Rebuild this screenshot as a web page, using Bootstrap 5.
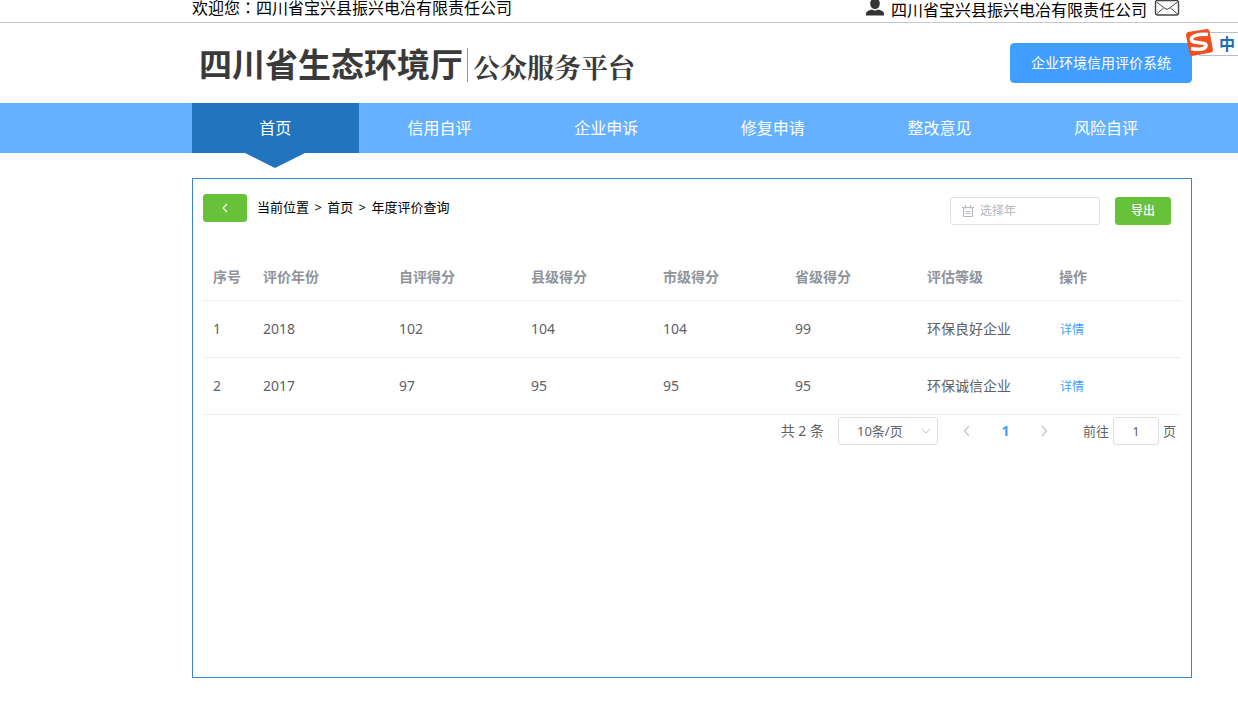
<!DOCTYPE html>
<html lang="zh-CN">
<head>
<meta charset="utf-8">
<meta name="viewport" content="width=device-width, initial-scale=1">
<title>年度评价查询</title>
<link rel="stylesheet" href="https://cdn.jsdelivr.net/npm/bootstrap@5.3.0/dist/css/bootstrap.min.css">
<style>
  body { font-family: "Noto Sans", "Noto Sans CJK SC", sans-serif; font-size: 14px; line-height: 20px; color: #606266; background: #fff; }
  .site-wrap { max-width: 1000px; margin-left: 192px; }
  .welcome-bar { border-bottom: 1px solid #c8c8c8; height: 23px; font-size: 16px; line-height: 16px; color: #000; font-family: "Liberation Sans", "Noto Sans CJK SC", sans-serif; }
  .welcome { padding-top: 1px; }
  .mid-colon { font-family: "Noto Sans CJK TC", sans-serif; line-height: 0; }
  .account { padding: 3px 12px 0 0; gap: 7px; }
  .account svg { margin-top: -3px; }
  .brand-row { min-height: 80px; }
  .brand { padding: 4px 0 0 7px; }
  .brand-main { font-size: 33px; line-height: 36px; font-weight: 700; color: #3a3a3a; }
  .brand-sub { font-size: 27px; line-height: 36px; padding-top: 4px; font-weight: 700; color: #3a3a3a; font-family: "Noto Serif CJK SC", "Noto Sans CJK SC", serif; }
  .brand-rule { width: 1px; height: 34px; background: #999; margin: 0 5px 0 4px; }
  .btn-system { background: #409eff; color: #fff; font-size: 14px; line-height: 20px; padding: 9px 20px; border: 1px solid #409eff; border-radius: 4px; }
  .main-nav { background: #66b1ff; }
  .main-nav .nav-link { flex: 0 0 calc(100% / 6); text-align: center; color: #fff; font-size: 16px; line-height: 24px; padding: 13px 5px 13px 0; border-radius: 0; }
  .main-nav .nav-link.active { background: #2175bc; position: relative; padding-right: 0; }
  .main-nav .nav-link.active::after { content: ""; position: absolute; top: 100%; left: 50%; margin-left: -30px; border: 30px solid transparent; border-top: 15px solid #2175bc; border-bottom: 0; }
  .panel-box { border: 1px solid #3d86c6; margin-top: 25px; padding: 15px 10px; min-height: 500px; }
  .btn-green { background: #67c23a; border: 1px solid #67c23a; color: #fff; border-radius: 3px; height: 28px; font-size: 12px; line-height: 12px; font-weight: 500; padding: 7px 15px; }
  .btn-back { width: 44px; }
  .crumb { color: #000; font-size: 13px; margin-left: 10px; padding-top: 3px; }
  .crumb span { margin: 0 2px; }
  .tools { padding: 3px 10px 0 0; gap: 15px; }
  .year-box { width: 150px; position: relative; }
  .year-box svg { position: absolute; left: 12px; top: 8px; }
  .field { border: 1px solid #dcdfe6; border-radius: 3px; height: 28px; font-size: 13px; line-height: 20px; color: #606266; background-color: #fff; }
  .year-box .field { padding: 0 8px 2px 29px; font-size: 12px; width: 100%; }
  .field::placeholder { color: #b4b8c0; opacity: 1; }
  .score-table { table-layout: fixed; margin: 25px 0 0; --bs-table-bg: transparent; }
  .score-table th, .score-table td { padding: 18px 10px 17px; border-bottom: 1px solid #ebeef5; color: #606266; line-height: 20px; }
  .score-table th { color: #909399; padding: 17px 10px 13px; font-weight: 700; }
  .score-table a { font-size: 12px; color: #409eff; text-decoration: none; padding-left: 1px; }
  .col-no { width: 50px; }
  .col-year { width: 136px; }
  .pager { font-size: 13px; padding: 2px 5px 0 0; }
  .pager-total { font-size: 14px; }
  .page-size { width: 100px; margin: 0 14px; padding: 0 18px; appearance: none; }
  .size-box { position: relative; }
  .size-box svg { position: absolute; right: 21px; top: 10px; pointer-events: none; }
  .step { border: 0; background: none; width: 30px; height: 28px; padding: 0; color: #c0c4cc; display: flex; align-items: center; justify-content: center; }
  .current { width: 47px; text-align: center; font-size: 14px; font-weight: 700; color: #409eff; text-decoration: none; }
  .jump { width: 46px; text-align: center; margin: 0 4px; }
  .ime-bar { position: absolute; top: 28px; right: 0; width: 53px; height: 29px; }
  .ime-bar span { position: absolute; left: 14px; right: 0; top: 4px; height: 24px; background: #fff; border: 1px solid #b9bec8; border-right: 0; padding-left: 19px; line-height: 22px; font-size: 16px; font-weight: 700; color: #1c6cb8; }
  .ime-bar svg { position: absolute; left: 0; top: 0; }
</style>
<script src="https://cdn.jsdelivr.net/npm/bootstrap@5.3.0/dist/js/bootstrap.bundle.min.js"></script>
</head>
<body>
<div class="welcome-bar">
  <div class="site-wrap d-flex justify-content-between">
    <span class="welcome">欢迎您<span class="mid-colon" lang="zh-TW">：</span>四川省宝兴县振兴电冶有限责任公司</span>
    <div class="account d-flex">
      <svg width="18" height="16" viewBox="0 0 18 16" fill="#333" aria-hidden="true"><ellipse cx="9" cy="3.500" rx="4.800" ry="5.500"/><path d="M0 15.500v-2c0-2 2-3 6-4 2 1.200 4 1.200 6 0 4 1 6 2 6 4v2z"/></svg>
      <span>四川省宝兴县振兴电冶有限责任公司</span>
      <svg width="26" height="16" viewBox="0 0 26 16" fill="none" stroke="#444" aria-hidden="true"><rect x="1.500" y=".5" width="23" height="14.500" rx="2" stroke-width="1.400"/><path d="M2.500 2l8.500 6.500q2 1.500 4 0L23.500 2M2.500 14l7-6M23.500 14l-7-6"/></svg>
    </div>
  </div>
</div>

<header class="site-wrap brand-row d-flex align-items-center justify-content-between">
  <div class="brand d-flex align-items-center">
    <div class="brand-main">四川省生态环境厅</div>
    <div class="brand-rule"></div>
    <div class="brand-sub">公众服务平台</div>
  </div>
  <button type="button" class="btn-system">企业环境信用评价系统</button>
</header>

<nav class="main-nav">
  <div class="site-wrap nav">
    <a class="nav-link active" aria-current="page" href="#">首页</a>
    <a class="nav-link" href="#">信用自评</a>
    <a class="nav-link" href="#">企业申诉</a>
    <a class="nav-link" href="#">修复申请</a>
    <a class="nav-link" href="#">整改意见</a>
    <a class="nav-link" href="#">风险自评</a>
  </div>
</nav>

<main class="site-wrap panel-box">
  <div class="d-flex align-items-start">
    <button type="button" class="btn-green btn-back p-0" aria-label="返回"><svg width="10" height="12" viewBox="0 0 10 12" fill="none" stroke="#fff" stroke-width="1.200" aria-hidden="true"><path d="M7 2L3 6l4 4"/></svg></button>
    <div class="crumb">当前位置 <span>&gt;</span> 首页 <span>&gt;</span> 年度评价查询</div>
    <div class="tools d-flex ms-auto">
      <div class="year-box">
        <svg width="12" height="12" viewBox="0 0 12 12" fill="none" stroke="#b4b8c0" aria-hidden="true"><path d="M0 2.500h12M1.500 2.500v9h9v-9M3.500 0v4M8.500 0v4M3.500 6.500h5M3.500 8.500h5"/></svg>
        <input class="field" type="text" placeholder="选择年" aria-label="选择年">
      </div>
      <button type="button" class="btn-green">导出</button>
    </div>
  </div>

  <table class="table score-table">
    <colgroup><col class="col-no"><col class="col-year"><col><col><col><col><col><col></colgroup>
    <thead>
      <tr><th>序号</th><th>评价年份</th><th>自评得分</th><th>县级得分</th><th>市级得分</th><th>省级得分</th><th>评估等级</th><th>操作</th></tr>
    </thead>
    <tbody>
      <tr><td>1</td><td>2018</td><td>102</td><td>104</td><td>104</td><td>99</td><td>环保良好企业</td><td><a href="#">详情</a></td></tr>
      <tr><td>2</td><td>2017</td><td>97</td><td>95</td><td>95</td><td>95</td><td>环保诚信企业</td><td><a href="#">详情</a></td></tr>
    </tbody>
  </table>

  <div class="pager d-flex align-items-center justify-content-end">
    <span class="pager-total">共 2 条</span>
    <div class="size-box">
      <select class="field page-size" aria-label="每页条数"><option>10条/页</option></select>
      <svg width="10" height="8" viewBox="0 0 10 8" fill="none" stroke="#c0c4cc" aria-hidden="true"><path d="M1 2l4 4 4-4"/></svg>
    </div>
    <button type="button" class="step" aria-label="上一页"><svg width="10" height="12" viewBox="0 0 10 12" fill="none" stroke="currentColor" stroke-width="1.200"><path d="M7 1L2.500 6 7 11"/></svg></button>
    <a class="current" href="#">1</a>
    <button type="button" class="step" aria-label="下一页"><svg width="10" height="12" viewBox="0 0 10 12" fill="none" stroke="currentColor" stroke-width="1.200"><path d="M3 1l4.500 5L3 11"/></svg></button>
    <label class="ms-4" for="jump">前往</label>
    <input class="field jump" id="jump" type="text" value="1">
    <span>页</span>
  </div>
</main>

<div class="ime-bar">
  <span>中</span>
  <svg width="30" height="29" viewBox="0 0 30 29" aria-hidden="true"><path d="M3 4L22 1q2 0 2.500 2L28 22q0 2-2 2.500L7 28q-2 0-2.500-2L1 7q0-2 2-3z" fill="#ee4f23"/><path d="M23 6.500C14 5.500 5.500 8 6.500 12c1 4 14.500 1.500 14.500 5.500 0 4-8 4.500-15 3" fill="none" stroke="#fff" stroke-width="3.600"/></svg>
</div>
</body>
</html>
